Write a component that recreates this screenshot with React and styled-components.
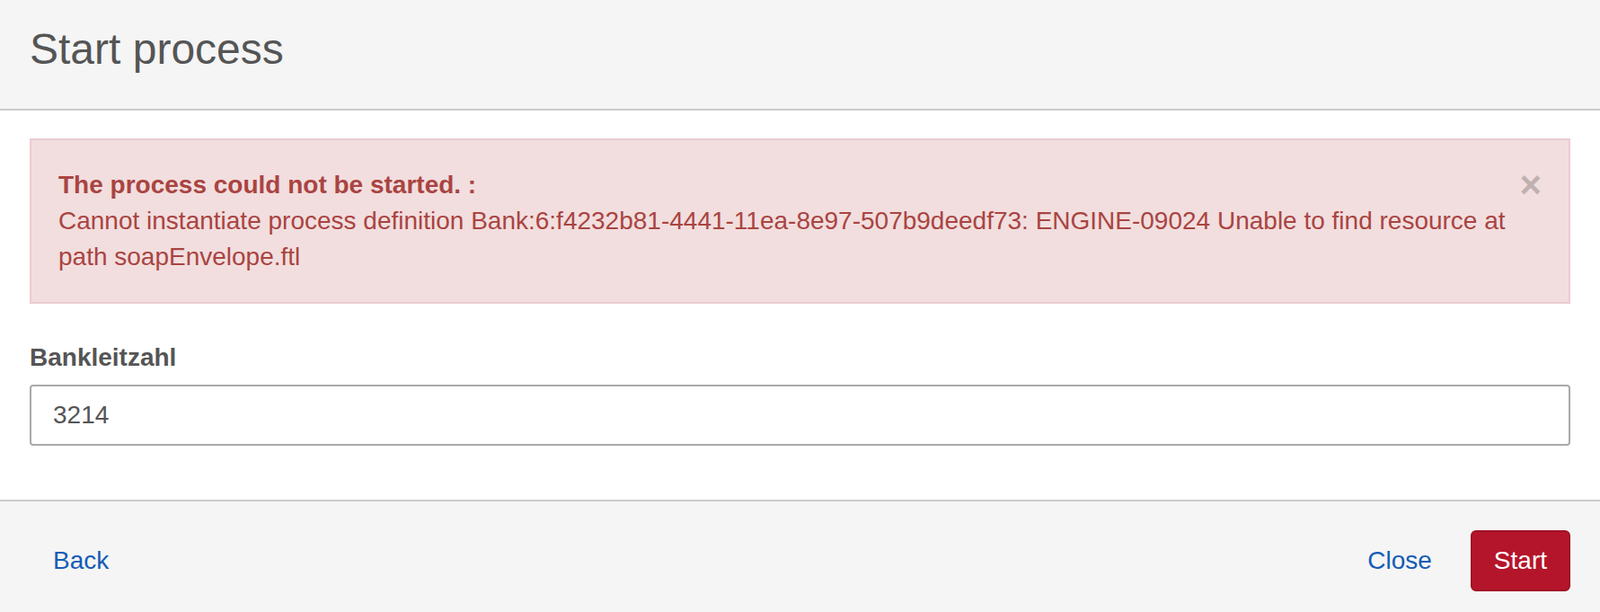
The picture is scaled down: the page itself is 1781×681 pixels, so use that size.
import React from "react";
import styled, { createGlobalStyle } from "styled-components";

const GlobalStyle = createGlobalStyle`
  html, body {
    margin: 0;
    padding: 0;
    background: #ffffff;
  }
  body {
    font-family: "Liberation Sans", Arial, sans-serif;
    font-size: 28px;
    line-height: 40px;
    color: #555555;
  }
  * {
    box-sizing: border-box;
  }
`;

const Modal = styled.div`
  width: 100%;
  display: flex;
  flex-direction: column;
  background: #ffffff;
`;

const Header = styled.header`
  height: 123px;
  padding: 29px 33px 0;
  background: #f5f5f5;
  border-bottom: 2px solid #cbcbcb;
`;

const Title = styled.h3`
  margin: 0;
  font-size: 48px;
  line-height: 52.8px;
  font-weight: 400;
  color: #555555;
`;

const Body = styled.div`
  padding: 31px 33px 30px;
`;

const Alert = styled.div`
  position: relative;
  margin-bottom: 40px;
  padding: 30px 70px 30px 30px;
  background: #f2dede;
  border: 2px solid #ebccd1;
  color: #a94442;
`;

const AlertTitle = styled.strong`
  display: block;
  font-weight: 700;
`;

const CloseX = styled.button`
  position: absolute;
  top: 29px;
  right: 30px;
  padding: 0;
  border: 0;
  background: transparent;
  font-family: "Liberation Sans", Arial, sans-serif;
  font-size: 42px;
  font-weight: 700;
  line-height: 1;
  color: #000000;
  opacity: 0.2;
  cursor: pointer;
`;

const FormGroup = styled.div`
  margin-bottom: 30px;
`;

const Label = styled.label`
  display: block;
  margin-bottom: 10px;
  font-weight: 700;
  color: #555555;
`;

const Input = styled.input`
  display: block;
  width: 100%;
  height: 68px;
  padding: 12px 24px;
  font-family: "Liberation Sans", Arial, sans-serif;
  font-size: 28px;
  line-height: 40px;
  color: #555555;
  background: #ffffff;
  border: 2px solid #a9a9a9;
  border-radius: 4px;
  outline: none;
`;

const Footer = styled.footer`
  display: flex;
  align-items: center;
  padding: 32px 33px 30px;
  background: #f5f5f5;
  border-top: 2px solid #cbcbcb;
`;

const Spacer = styled.div`
  flex: 1;
`;

const Button = styled.button`
  height: 68px;
  padding: 12px 24px;
  font-family: "Liberation Sans", Arial, sans-serif;
  font-size: 28px;
  line-height: 40px;
  border-radius: 6px;
  cursor: pointer;
  border: 2px solid ${(p) => (p.$primary ? "#9f1326" : "transparent")};
  background: ${(p) => (p.$primary ? "#b5152b" : "transparent")};
  color: ${(p) => (p.$primary ? "#ffffff" : "#155cb5")};
  margin-left: ${(p) => p.$gap || 0}px;
`;

export default function App() {
  return (
    <>
      <GlobalStyle />
      <Modal>
        <Header>
          <Title>Start process</Title>
        </Header>
        <Body>
          <Alert>
            <CloseX aria-label="Close">×</CloseX>
            <AlertTitle>The process could not be started. :</AlertTitle>
            Cannot instantiate process definition
            Bank:6:f4232b81-4441-11ea-8e97-507b9deedf73: ENGINE-09024 Unable
            to find resource at path soapEnvelope.ftl
          </Alert>
          <FormGroup>
            <Label htmlFor="blz">Bankleitzahl</Label>
            <Input id="blz" defaultValue="3214" />
          </FormGroup>
        </Body>
        <Footer>
          <Button>Back</Button>
          <Spacer />
          <Button>Close</Button>
          <Button $primary $gap={17}>
            Start
          </Button>
        </Footer>
      </Modal>
    </>
  );
}
